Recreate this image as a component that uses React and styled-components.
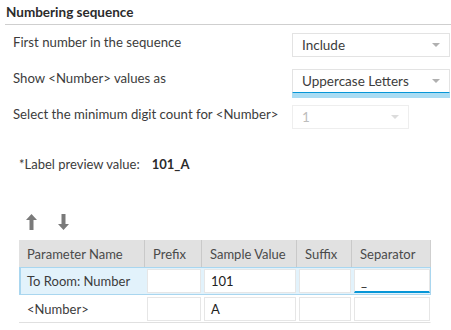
import React from 'react';
import styled, { createGlobalStyle } from 'styled-components';

const Global = createGlobalStyle`
  body {
    margin: 0;
    background: #fff;
    font-family: Lato, "Open Sans", sans-serif;
    color: #3c3c3c;
  }
`;

const Page = styled.div`
  width: 451px;
  height: 330px;
  overflow: hidden;
`;

const Header = styled.div`
  height: 24px;
  border-bottom: 1px solid #cfcfcf;
  margin-left: 5px;
  padding-left: 1px;
  display: flex;
  align-items: center;
  font-size: 13.5px;
  font-weight: 700;
  color: #2b2b2b;
`;

const Form = styled.div`
  padding-top: 8px;
  display: flex;
  flex-direction: column;
`;

const Row = styled.div`
  height: 36px;
  display: flex;
  align-items: flex-start;
  padding-left: 13px;
`;

const Label = styled.span`
  flex: 1;
  font-size: 13.2px;
  line-height: 16px;
  padding-top: 1px;
`;

const Select = styled.div`
  box-sizing: border-box;
  width: ${p => p.$width || 158}px;
  margin-right: ${p => 159 - (p.$width || 158)}px;
  height: 24px;
  display: flex;
  align-items: center;
  justify-content: space-between;
  padding: 0 9px 0 9px;
  background: #fff;
  border: 1px solid ${p => (p.$disabled ? '#eeeeee' : '#e3e3e3')};
  border-bottom: 1px solid ${p => (p.$focused ? '#0696d7' : p.$disabled ? '#eeeeee' : '#e3e3e3')};
  box-shadow: ${p => (p.$focused ? '0 5px 0 0 #a9dcf3' : 'none')};
  font-size: 13.5px;
  color: ${p => (p.$disabled ? '#bdbdbd' : '#3c3c3c')};
`;

const Caret = styled.span`
  width: 0;
  height: 0;
  border-left: 4px solid transparent;
  border-right: 4px solid transparent;
  border-top: 4px solid ${p => (p.$disabled ? '#dcdcdc' : '#b0b0b0')};
`;

const Preview = styled.div`
  margin-top: 15px;
  padding-left: 19px;
  font-size: 13px;
  display: flex;
  gap: 12px;
`;

const PreviewValue = styled.span`
  font-weight: 700;
  color: #2b2b2b;
`;

const Arrows = styled.div`
  margin-top: 42px;
  padding-left: 26px;
  display: flex;
  gap: 21px;
  height: 16px;
`;

const Table = styled.div`
  margin: 10px 0 0 19px;
  width: 412px;
  font-size: 13px;
`;

const cols = '126px 57px 95px 55px 79px';

const HeadRow = styled.div`
  display: grid;
  grid-template-columns: ${cols};
  height: 27px;
  background: #e1e1e1;
`;

const HeadCell = styled.div`
  display: flex;
  align-items: center;
  padding-left: 8px;
  color: #4a4a4a;
  border-right: 1px solid #c9c9c9;
  &:last-child { border-right: 1px solid #cfcfcf; }
`;

const BodyRow = styled.div`
  box-sizing: border-box;
  display: grid;
  grid-template-columns: ${cols};
  height: 28px;
  background: ${p => (p.$selected ? '#e2f2fb' : '#fff')};
  border: 1px solid ${p => (p.$selected ? '#a9d6ef' : 'transparent')};
  border-bottom: 1px solid ${p => (p.$selected ? '#a9d6ef' : '#e0e0e0')};
  border-left: none;
  border-right: 1px solid ${p => (p.$selected ? '#a9d6ef' : '#fff')};
  box-shadow: ${p => (p.$selected ? 'inset 2px 0 0 #a9d6ef' : 'none')};
`;

const NameCell = styled.div`
  display: flex;
  align-items: center;
  padding-left: 8px;
  color: #3c3c3c;
`;

const InputCell = styled.div`
  box-sizing: border-box;
  margin: 1px 1px 1px 2px;
  display: flex;
  align-items: center;
  padding-left: 6px;
  background: #fff;
  border: 1px solid #e6e6e6;
  border-bottom: ${p => (p.$focused ? '2px solid #0696d7' : '1px solid #e6e6e6')};
  color: #222;
`;

const Arrow = ({ down }) => (
  <svg width="11" height="16" viewBox="0 0 11 16" style={{ transform: down ? 'rotate(180deg)' : 'none' }}>
    <path d="M5.5 0 L11 6 L7.5 6 L7.5 16 L3.5 16 L3.5 6 L0 6 Z" fill="#7a7a7a" />
  </svg>
);

export default function App() {
  return (
    <Page>
      <Global />
      <Header>Numbering sequence</Header>
      <Form>
        <Row>
          <Label>First number in the sequence</Label>
          <Select>Include<Caret /></Select>
        </Row>
        <Row>
          <Label>Show &lt;Number&gt; values as</Label>
          <Select $focused>Uppercase Letters<Caret /></Select>
        </Row>
        <Row>
          <Label>Select the minimum digit count for &lt;Number&gt;</Label>
          <Select $disabled $width={117}>1<Caret $disabled /></Select>
        </Row>
      </Form>
      <Preview>
        <span>*Label preview value:</span>
        <PreviewValue>101_A</PreviewValue>
      </Preview>
      <Arrows>
        <Arrow />
        <Arrow down />
      </Arrows>
      <Table>
        <HeadRow>
          <HeadCell>Parameter Name</HeadCell>
          <HeadCell>Prefix</HeadCell>
          <HeadCell>Sample Value</HeadCell>
          <HeadCell>Suffix</HeadCell>
          <HeadCell>Separator</HeadCell>
        </HeadRow>
        <BodyRow $selected>
          <NameCell>To Room: Number</NameCell>
          <InputCell />
          <InputCell>101</InputCell>
          <InputCell />
          <InputCell $focused>_</InputCell>
        </BodyRow>
        <BodyRow>
          <NameCell>&lt;Number&gt;</NameCell>
          <InputCell />
          <InputCell>A</InputCell>
          <InputCell />
          <InputCell />
        </BodyRow>
      </Table>
    </Page>
  );
}
